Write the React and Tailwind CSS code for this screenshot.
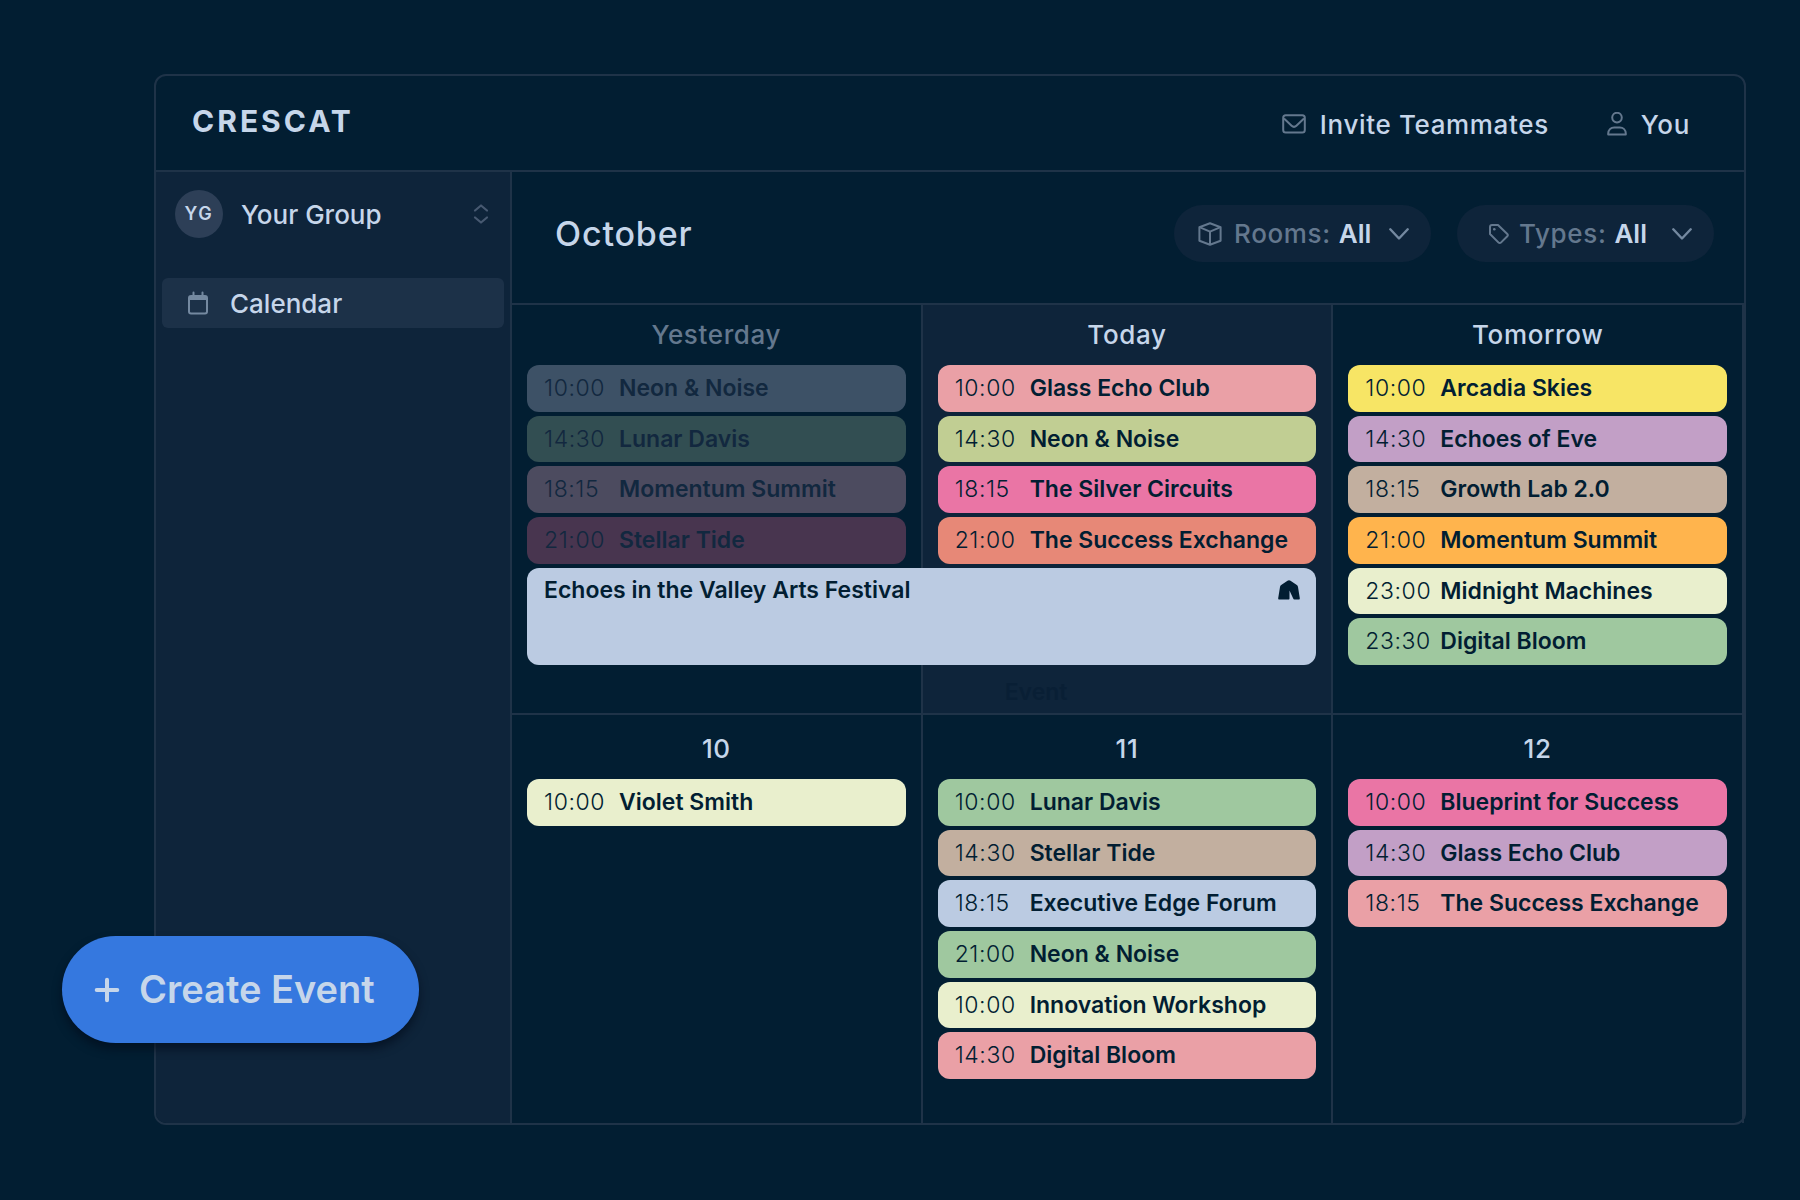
import React from 'react';

const weeks = [
    {
        headClass: 'h-[60px] pb-[2px]',
        days: [
            {
                label: 'Yesterday',
                past: true,
                events: [
                    { time: '10:00', title: 'Neon & Noise', color: 'bg-[#3d5166]' },
                    { time: '14:30', title: 'Lunar Davis', color: 'bg-[#324e52]' },
                    { time: '18:15', title: 'Momentum Summit', color: 'bg-[#4c4b5f]' },
                    { time: '21:00', title: 'Stellar Tide', color: 'bg-[#48354f]' },
                ],
                festival: 'Echoes in the Valley Arts Festival',
            },
            {
                label: 'Today',
                today: true,
                events: [
                    { time: '10:00', title: 'Glass Echo Club', color: 'bg-[#eaa0a6]' },
                    { time: '14:30', title: 'Neon & Noise', color: 'bg-[#c1ce93]' },
                    { time: '18:15', title: 'The Silver Circuits', color: 'bg-[#ea75a5]' },
                    { time: '21:00', title: 'The Success Exchange', color: 'bg-[#e78877]' },
                ],
                ghost: 'Event',
            },
            {
                label: 'Tomorrow',
                events: [
                    { time: '10:00', title: 'Arcadia Skies', color: 'bg-[#f7e565]' },
                    { time: '14:30', title: 'Echoes of Eve', color: 'bg-[#c29fc6]' },
                    { time: '18:15', title: 'Growth Lab 2.0', color: 'bg-[#c2af9f]' },
                    { time: '21:00', title: 'Momentum Summit', color: 'bg-[#ffb44d]' },
                    { time: '23:00', title: 'Midnight Machines', color: 'bg-[#e9efcd]' },
                    { time: '23:30', title: 'Digital Bloom', color: 'bg-[#9fc89f]' },
                ],
            },
        ],
    },
    {
        headClass: 'h-16 pt-[2px]',
        days: [
            {
                label: '10',
                events: [{ time: '10:00', title: 'Violet Smith', color: 'bg-[#e9efcd]' }],
            },
            {
                label: '11',
                events: [
                    { time: '10:00', title: 'Lunar Davis', color: 'bg-[#9fc89f]' },
                    { time: '14:30', title: 'Stellar Tide', color: 'bg-[#c2af9f]' },
                    { time: '18:15', title: 'Executive Edge Forum', color: 'bg-[#bbcbe2]' },
                    { time: '21:00', title: 'Neon & Noise', color: 'bg-[#9fc89f]' },
                    { time: '10:00', title: 'Innovation Workshop', color: 'bg-[#e9efcd]' },
                    { time: '14:30', title: 'Digital Bloom', color: 'bg-[#eaa0a6]' },
                ],
            },
            {
                label: '12',
                events: [
                    { time: '10:00', title: 'Blueprint for Success', color: 'bg-[#ea75a5]' },
                    { time: '14:30', title: 'Glass Echo Club', color: 'bg-[#c29fc6]' },
                    { time: '18:15', title: 'The Success Exchange', color: 'bg-[#eaa0a6]' },
                ],
            },
        ],
    },
];

function MailIcon() {
    return (
        <svg className="w-6 h-6 text-[#64788e]" viewBox="0 0 24 24" fill="none" stroke="currentColor" strokeWidth="2">
            <rect x="1.2" y="3.2" width="21.6" height="17.4" rx="2.5" />
            <path d="M2 6.5l7.6 7.2a3.5 3.5 0 0 0 4.8 0L22 6.5" />
        </svg>
    );
}

function UserIcon() {
    return (
        <svg className="w-5 h-6 text-[#64788e]" viewBox="0 0 20 24" fill="none" stroke="currentColor" strokeWidth="2" strokeLinejoin="round">
            <circle cx="10" cy="5.6" r="4.8" />
            <path d="M1.2 22.4v-.8c0-3.6 2.6-6.2 6-6.2h5.6c3.4 0 6 2.6 6 6.2v.8z" />
        </svg>
    );
}

function BoxIcon() {
    return (
        <svg className="w-6 h-6 text-[#64788e]" viewBox="0 0 24 24" fill="none" stroke="currentColor" strokeWidth="2" strokeLinejoin="round">
            <path d="M12 1.2l10.6 4v13.6L12 22.8l-10.6-4V5.2z" />
            <path d="M1.4 5.2L12 9.6l10.6-4.4M12 9.6v13.2" />
        </svg>
    );
}

function TagIcon() {
    return (
        <svg className="w-5 h-6 text-[#64788e]" viewBox="0 0 20 24" fill="none" stroke="currentColor" strokeWidth="2" strokeLinejoin="round">
            <path d="M1 5a2 2 0 0 1 2-2h6l9.3 9a1.6 1.6 0 0 1 0 2.2l-6.4 6.4a1.6 1.6 0 0 1-2.3 0L1 12z" />
            <circle cx="5.3" cy="7.3" r="1.3" fill="currentColor" stroke="none" />
        </svg>
    );
}

function CalendarIcon() {
    return (
        <svg className="w-5 h-6 text-[#7489a0]" viewBox="0 0 20 24" fill="none" stroke="currentColor" strokeWidth="2">
            <rect x="1" y="5" width="18" height="17.5" rx="2" />
            <path d="M1 5h18v4H1z" fill="currentColor" stroke="none" />
            <path d="M5.5 1.5v4M14.5 1.5v4" strokeLinecap="round" />
        </svg>
    );
}

function SelectorIcon() {
    return (
        <svg className="w-4 h-5 text-[#475971]" viewBox="0 0 16 20" fill="none" stroke="currentColor" strokeWidth="2.2" strokeLinecap="round" strokeLinejoin="round">
            <path d="M2 6.5l6-5 6 5M2 13.5l6 5 6-5" />
        </svg>
    );
}

function ChevronIcon() {
    return (
        <svg className="w-5 h-3 text-[#7489a0]" viewBox="0 0 20 12" fill="none" stroke="currentColor" strokeWidth="2.4" strokeLinecap="round" strokeLinejoin="round">
            <path d="M1.3 1.3l8.7 9.2 8.7-9.2" />
        </svg>
    );
}

function TentIcon() {
    return (
        <svg className="w-[22px] h-5" viewBox="0 0 22 20" fill="currentColor">
            <path d="M11 .3c.6 0 1 .2 1.5.5l6.3 4.3c.7.5 1 1 1.2 1.8l1.8 11.3c.1.8-.3 1.3-1.1 1.3h-4.2c-.7 0-1.1-.3-1.3-1L11.500 10.500v8c0 .6-.4 1-1 1H1.300c-.8 0-1.200-.5-1.100-1.300L2 6.900c.2-.8.5-1.300 1.200-1.800L9.500.8c.5-.3.900-.5 1.500-.5z" />
        </svg>
    );
}

function FilterSelect({ id, label, icon, className }) {
    return (
        <div className={`flex items-center w-[257px] h-[57px] pr-[22px] rounded-full bg-[#0e243a] text-[26px] font-medium ${className}`}>
            {icon}
            <div className="flex items-center gap-2">
                <label htmlFor={id} className="text-[#64788e] tracking-wide">{label}:</label>
                <select id={id} className="appearance-none outline-none font-semibold">
                    <option>All</option>
                </select>
            </div>
            <span className="ml-auto pointer-events-none">
                <ChevronIcon />
            </span>
        </div>
    );
}

function EventPill({ event, past }) {
    return (
        <li className={`flex items-center pl-[17px] rounded-xl text-[23px] ${event.color} ${past ? 'text-[#12283f]' : 'text-[#021e32]'}`}>
            <span className="w-[75px] font-light tracking-wide">{event.time}</span>
            <span className="font-semibold whitespace-nowrap">{event.title}</span>
        </li>
    );
}

function DayCell({ day, headClass }) {
    return (
        <section className={`px-[15px] border-r-2 border-[#1f3348] ${day.today ? 'bg-[#0e243a]' : ''}`}>
            <h2 className={`flex items-center justify-center text-[26px] font-medium tracking-wide ${headClass} ${day.past ? 'text-[#64788e]' : ''}`}>
                {day.label}
            </h2>
            <ul className="grid grid-rows-6 gap-1 h-[300px]">
                {day.events.map((event, i) => (
                    <EventPill key={i} event={event} past={day.past} />
                ))}
                {/* runs over into the next day */}
                {day.festival && (
                    <li className="relative z-10 row-span-2 flex justify-between items-start w-[calc(200%+32px)] pl-[17px] pr-4 pt-3 rounded-xl bg-[#bbcbe2] text-[#021e32] text-[23px] leading-5 font-semibold">
                        {day.festival}
                        <TentIcon />
                    </li>
                )}
            </ul>
            {day.ghost && <p className="pt-[10px] pl-[67px] text-[23px] font-semibold text-[#091f35]">{day.ghost}</p>}
        </section>
    );
}

export default function App() {
    return (
        <div className="min-h-screen bg-[#021e32] pt-[74px] pb-12 pl-[154px] pr-[54px] text-[#c6d6ea] font-['Inter',sans-serif]">
            <div className="relative border-2 border-[#1f3348] rounded-xl">
                <header className="flex items-center justify-between h-24 pl-[36px] pr-[54px] border-b-2 border-[#1f3348]">
                    <h1 className="pb-1 text-[30px] font-bold tracking-widest">CRESCAT</h1>
                    <nav className="flex items-center gap-[58px] pt-[2px] text-[26px] font-medium tracking-wide">
                        <a href="#invite" className="flex items-center gap-[14px]">
                            <MailIcon /> Invite Teammates
                        </a>
                        <a href="#you" className="flex items-center gap-[14px]">
                            <UserIcon /> You
                        </a>
                    </nav>
                </header>

                <div className="flex">
                    <aside className="w-[356px] shrink-0 border-r-2 border-[#1f3348] rounded-bl-[10px] bg-[#0e243a] px-[6px] text-[26px] font-medium">
                        <button className="flex items-center w-full mt-[18px] pl-[13px] pr-[15px]">
                            <span className="flex items-center justify-center size-12 mr-[18px] rounded-full bg-[#2d3f57] text-lg font-semibold tracking-widest">YG</span>
                            Your Group
                            <span className="ml-auto">
                                <SelectorIcon />
                            </span>
                        </button>
                        <a href="#calendar" className="flex items-center gap-[22px] h-[50px] mt-10 pl-[26px] rounded-md bg-[#1c3148]">
                            <CalendarIcon /> Calendar
                        </a>
                    </aside>

                    <main className="flex-1">
                        <div className="flex items-center justify-between h-[133px] pl-[43px] pr-[30px] pb-2 border-b-2 border-[#1f3348]">
                            <h2 className="text-[34px] font-medium tracking-wide">October</h2>
                            <div className="flex gap-[26px]">
                                <FilterSelect id="rooms" label="Rooms" className="pl-6 gap-3" icon={<BoxIcon />} />
                                <FilterSelect id="types" label="Types" className="pl-8 gap-[10px]" icon={<TagIcon />} />
                            </div>
                        </div>
                        {weeks.map((week, i) => (
                            <div key={i} className={`grid grid-cols-3 ${i < weeks.length - 1 ? 'min-h-[410px] border-b-2 border-[#1f3348]' : 'min-h-[408px]'}`}>
                                {week.days.map((day) => (
                                    <DayCell key={day.label} day={day} headClass={week.headClass} />
                                ))}
                            </div>
                        ))}
                    </main>
                </div>

                <button className="absolute bottom-20 left-[-94px] flex items-center gap-[18px] h-[107px] pl-[31px] pr-[44px] rounded-full bg-[#3578df] text-[38px] font-semibold shadow-[0_6px_10px_rgba(0,10,25,0.6)]">
                    <svg className="size-7" viewBox="0 0 28 28" fill="none" stroke="currentColor" strokeWidth="4" strokeLinecap="round">
                        <path d="M14 3.7v20.6M3.7 14h20.6" />
                    </svg>
                    Create Event
                </button>
            </div>
        </div>
    );
}
